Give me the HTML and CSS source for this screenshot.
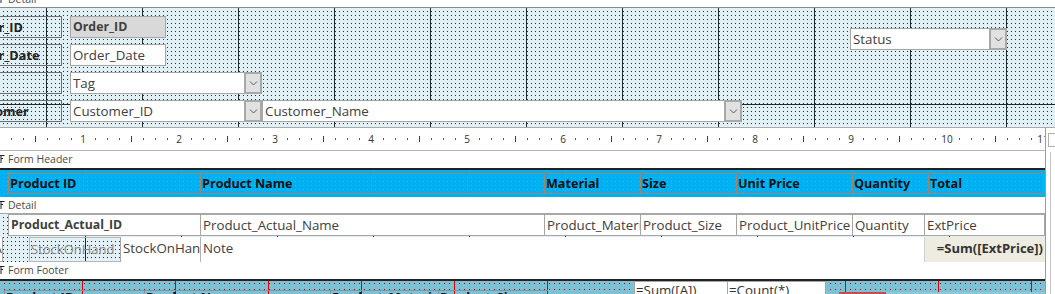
FILE: index.html
```html
<!DOCTYPE html>
<html>
<head>
<meta charset="utf-8">
<title>Form design view</title>
<link rel="stylesheet" href="styles.css">
</head>
<body>
<div class="designer">

  <div class="bar bar-top">
    <svg class="sel" width="5" height="9" viewBox="0 0 5 9"><path d="M0 0.5H4.5M1 0.5V8M1 3.5H3" fill="none" stroke="#222" stroke-width="1"/></svg>
    Detail
  </div>

  <!-- main form detail section -->
  <div class="form-detail">
    <div class="frow">
      <div class="lbl">Order_ID</div>
      <div class="tb w96 locked">Order_ID</div>
    </div>
    <div class="frow">
      <div class="lbl">Order_Date</div>
      <div class="tb w96">Order_Date</div>
    </div>
    <div class="frow">
      <div class="lbl"></div>
      <div class="tb combo w192">
        <span class="txt">Tag</span>
        <span class="btn"><svg width="9" height="5" viewBox="0 0 9 5"><path d="M1 0.5L4.5 4L8 0.5" fill="none" stroke="#5a5a5a"/></svg></span>
      </div>
    </div>
    <div class="frow">
      <div class="lbl">Customer</div>
      <div class="tb combo w192">
        <span class="txt">Customer_ID</span>
        <span class="btn"><svg width="9" height="5" viewBox="0 0 9 5"><path d="M1 0.5L4.5 4L8 0.5" fill="none" stroke="#5a5a5a"/></svg></span>
      </div>
      <div class="tb combo w480">
        <span class="txt">Customer_Name</span>
        <span class="btn"><svg width="9" height="5" viewBox="0 0 9 5"><path d="M1 0.5L4.5 4L8 0.5" fill="none" stroke="#5a5a5a"/></svg></span>
      </div>
    </div>

    <div class="tb combo status">
      <span class="txt">Status</span>
      <span class="btn"><svg width="9" height="5" viewBox="0 0 9 5"><path d="M1 0.5L4.5 4L8 0.5" fill="none" stroke="#5a5a5a"/></svg></span>
    </div>
  </div>

  <!-- subform control -->
  <div class="subform">
    <div class="sub-main">
      <div class="ruler">
        <span><b>1</b></span><span><b>2</b></span><span><b>3</b></span><span><b>4</b></span>
        <span><b>5</b></span><span><b>6</b></span><span><b>7</b></span><span><b>8</b></span>
        <span><b>9</b></span><span><b>10</b></span><span><b>11</b></span>
      </div>

      <div class="bar bar-thick">
        <svg class="sel" width="5" height="9" viewBox="0 0 5 9"><path d="M0 0.5H4.5M1 0.5V8M1 3.5H3" fill="none" stroke="#222" stroke-width="1"/></svg>
        Form Header
      </div>
      <div class="sub-header">
        <div class="hl w192">Product ID</div>
        <div class="hl w344">Product Name</div>
        <div class="hl w96">Material</div>
        <div class="hl w96">Size</div>
        <div class="hl w116">Unit Price</div>
        <div class="hl w76">Quantity</div>
        <div class="hl w116 last">Total</div>
      </div>

      <div class="bar bar-thin">
        <svg class="sel" width="5" height="9" viewBox="0 0 5 9"><path d="M0 0.5H4.5M1 0.5V8M1 3.5H3" fill="none" stroke="#222" stroke-width="1"/></svg>
        Detail
      </div>
      <div class="sub-detail">
        <div class="drow">
          <div class="cell w192 locked">Product_Actual_ID</div>
          <div class="cell w344">Product_Actual_Name</div>
          <div class="cell w96">Product_Material</div>
          <div class="cell w96">Product_Size</div>
          <div class="cell w116">Product_UnitPrice</div>
          <div class="cell w72">Quantity</div>
          <div class="cell w121 last">ExtPrice</div>
        </div>
        <div class="drow drow2">
          <div class="cell abox">A</div>
          <div class="ghost">StockOnHand</div>
          <div class="cell w80">StockOnHand</div>
          <div class="cell w724 plain">Note</div>
          <div class="cell w121 total">=Sum([ExtPrice])</div>
        </div>
      </div>

      <div class="bar bar-thick">
        <svg class="sel" width="5" height="9" viewBox="0 0 5 9"><path d="M0 0.5H4.5M1 0.5V8M1 3.5H3" fill="none" stroke="#222" stroke-width="1"/></svg>
        Form Footer
      </div>
      <div class="sub-footer">
        <div class="ff-left">
          <div class="fl w140">Product ID</div>
          <div class="fl w186">Product Name</div>
          <div class="fl w108">Product_Material</div>
          <div class="fl w110">Product_Size</div>
        </div>
        <div class="ff-box w93">=Sum([A])</div>
        <div class="ff-box w98">=Count(*)</div>
        <div class="ff-right">
          <div class="redbox">Product</div>
          <div class="lightbox">Unit_Price</div>
        </div>
      </div>
    </div>
    <div class="sub-side">
      <div class="corner"></div>
      <div class="vline"></div>
    </div>
  </div>

</div>
</body>
</html>
```

FILE: styles.css
```css
body {
  margin: 0;
  background: #fff;
  font-family: "Open Sans", "Noto Sans", sans-serif;
  overflow: hidden;
}

.designer {
  width: 1055px;
  height: 294px;
  overflow: hidden;
}

/* section bars */
.bar {
  position: relative;
  height: 16px;
  line-height: 16px;
  padding-left: 8px;
  font-size: 10.5px;
  color: #4a4a4a;
  background: #fff;
  white-space: nowrap;
}
.bar .sel {
  position: absolute;
  left: 0;
  top: 4px;
}
.bar-top {
  margin-top: -9px;
  border-bottom: 1px solid #8a8a8a;
}
.bar-thick {
  height: 17px;
  line-height: 17px;
  border-bottom: 2px solid #222;
}
.bar-thin {
  border-bottom: 1px solid #a8a8a8;
}

/* main form detail grid */
.form-detail {
  position: relative;
  box-sizing: border-box;
  height: 120px;
  padding-top: 8px;
  display: flex;
  flex-direction: column;
  gap: 6px;
  border-bottom: 1px solid #a9a9a9;
  background-color: #2b2b2b;
  background-image:
    linear-gradient(90deg, #1d2b30 1px, transparent 1px),
    linear-gradient(#1d2b30 1px, transparent 1px),
    linear-gradient(90deg, #e0f0f5 3px, transparent 3px),
    linear-gradient(#e0f0f5 3px, transparent 3px);
  background-size: 96px 100%, 100% 1px, 4px 4px, 4px 4px;
  background-position: 46px 0, 0 96px, 0 0, 0 0;
  background-repeat: repeat, no-repeat, repeat, repeat;
}

.frow {
  display: flex;
  height: 22px;
}

.lbl {
  box-sizing: border-box;
  width: 106px;
  margin-left: -44px;
  margin-right: 8px;
  padding-left: 10px;
  border: 1px solid #6e6e6e;
  font-size: 12.7px;
  font-weight: 700;
  line-height: 20px;
  color: #222;
  white-space: nowrap;
}

.tb {
  box-sizing: border-box;
  border: 1px solid #a6a6a6;
  background: #fff;
  padding-left: 2px;
  font-size: 13.3px;
  line-height: 20px;
  color: #404040;
  white-space: nowrap;
  overflow: hidden;
}
.locked {
  background: #d9d9d9;
  font-weight: 700;
}
.tb.locked,
.cell.locked {
  font-size: 12.3px;
}

.combo {
  display: flex;
  padding-left: 0;
  overflow: visible;
}
.combo .txt {
  flex: 1;
  padding-left: 2px;
  overflow: hidden;
}
.combo .btn {
  box-sizing: border-box;
  width: 18px;
  margin: -1px -1px -1px 0;
  border: 2px solid #a8a8a8;
  background: #e1e1e1;
  display: flex;
  align-items: center;
  justify-content: center;
}

.status {
  position: absolute;
  left: 850px;
  top: 20px;
  width: 157px;
  height: 22px;
}

.w72 { width: 72px; }
.w76 { width: 76px; }
.w80 { width: 80px; }
.w93 { width: 93px; }
.w96 { width: 96px; }
.w98 { width: 98px; }
.w108 { width: 108px; }
.w110 { width: 110px; }
.w116 { width: 116px; }
.w121 { width: 121px; }
.w140 { width: 140px; }
.w186 { width: 186px; }
.w192 { width: 192px; }
.w344 { width: 344px; }
.w480 { width: 480px; }
.w724 { width: 724px; }

/* subform */
.subform {
  display: flex;
}
.sub-main {
  width: 1045px;
  flex: none;
  overflow: hidden;
}
.sub-side {
  flex: 1;
  border-left: 1px solid #9c9c9c;
  background: #fff;
}
.corner {
  height: 12px;
  margin: 5px 0 5px 2px;
  border: 1px solid #b0b0b0;
  border-right: none;
}
.vline {
  height: 160px;
  margin-left: 4px;
  border-left: 1px solid #c4c4c4;
}

/* ruler */
.ruler {
  height: 22px;
  padding-left: 35px;
  display: flex;
  overflow: hidden;
  border-bottom: 1px solid #b4b4b4;
  background-color: #fff;
  background-image:
    linear-gradient(90deg, #3c3c3c 1px, transparent 1px),
    linear-gradient(90deg, #5a5a5a 1px, transparent 1px);
  background-size: 96px 6px, 12px 2px;
  background-position: 35px 8px, 11px 10px;
  background-repeat: repeat-x;
}
.ruler span {
  flex: none;
  width: 96px;
  text-align: center;
  font-size: 10px;
  line-height: 22px;
  color: #333;
}
.ruler b {
  font-weight: 400;
  background: #fff;
  padding: 0 2px;
}

/* subform form header */
.sub-header {
  box-sizing: border-box;
  height: 27px;
  padding: 3px 0 0 8px;
  display: flex;
  align-items: flex-start;
  background-color: #e2823e;
  background-image:
    linear-gradient(90deg, #e36c1f 1px, transparent 1px),
    linear-gradient(90deg, #00b0f0 3px, transparent 3px),
    linear-gradient(#00b0f0 3px, transparent 3px);
  background-size: 96px 100%, 4px 4px, 4px 4px;
  background-position: 85px 0, 0 0, 0 0;
}
.hl {
  box-sizing: border-box;
  height: 21px;
  padding-left: 1px;
  border: 1px solid #a4846c;
  border-right: none;
  font-size: 12.6px;
  font-weight: 700;
  line-height: 19px;
  color: #111;
  white-space: nowrap;
  overflow: hidden;
}
.hl.last {
  border-right: 1px solid #a4846c;
}

/* subform detail */
.sub-detail {
  height: 48px;
  background-color: #2b2b2b;
  background-image:
    linear-gradient(90deg, #1d2b30 1px, transparent 1px),
    linear-gradient(90deg, #e3f1f6 3px, transparent 3px),
    linear-gradient(#e3f1f6 3px, transparent 3px);
  background-size: 96px 100%, 4px 4px, 4px 4px;
  background-position: 85px 0, 0 0, 0 0;
}
.drow {
  display: flex;
  height: 22px;
  padding-left: 8px;
}
.drow2 {
  height: 25px;
  margin-top: 1px;
  padding-left: 0;
}
.cell {
  box-sizing: border-box;
  padding-left: 2px;
  border: 1px solid #a6a6a6;
  border-right: none;
  background: #fff;
  font-size: 13.3px;
  line-height: 20px;
  color: #404040;
  white-space: nowrap;
  overflow: hidden;
}
.cell.last {
  border-right: 1px solid #a6a6a6;
}
.drow2 .cell {
  line-height: 23px;
  border-top: none;
  border-bottom: none;
}
.cell.abox {
  width: 13px;
  margin-left: -10px;
  padding: 0;
  border-right: 1px solid #a6a6a6;
  border-bottom: 1px solid #a6a6a6;
  text-align: right;
  text-indent: -6px;
}
.ghost {
  box-sizing: border-box;
  width: 91px;
  margin-left: 26px;
  padding-left: 1px;
  border: 1px solid #b8b8b8;
  border-right: none;
  font-size: 13px;
  line-height: 23px;
  color: #868686;
  white-space: nowrap;
  overflow: hidden;
}
.cell.plain {
  border-left: 1px solid #b4b4b4;
}
.cell.total {
  background: #eeece1;
  border-left: 1px solid #d0d0d0;
  font-weight: 700;
  font-size: 13px;
  color: #333;
  text-align: right;
  padding-right: 2px;
}

/* subform footer */
.sub-footer {
  height: 20px;
  display: flex;
}
.ff-left {
  box-sizing: border-box;
  width: 634px;
  padding: 9px 0 0 4px;
  display: flex;
  align-items: flex-start;
  background-color: #c00000;
  background-image:
    linear-gradient(90deg, #e00000 1px, transparent 1px),
    linear-gradient(90deg, #7cc2d4 4px, transparent 4px),
    linear-gradient(#7cc2d4 5px, transparent 5px);
  background-size: 93px 100%, 5px 6px, 5px 6px;
  background-position: 82px 0, 0 3px, 0 3px;
}
.fl {
  box-sizing: border-box;
  height: 14px;
  padding-left: 1px;
  border: 1px solid #7d98a2;
  border-right: none;
  font-size: 13px;
  font-weight: 700;
  line-height: 13px;
  color: #111;
  white-space: nowrap;
  overflow: hidden;
}
.ff-box {
  box-sizing: border-box;
  border: 1px solid #a6a6a6;
  border-right: none;
  background: #fff;
  padding-left: 1px;
  font-size: 13.3px;
  line-height: 16px;
  color: #333;
  white-space: nowrap;
  overflow: hidden;
}
.ff-right {
  flex: 1;
  box-sizing: border-box;
  padding: 11px 0 0 13px;
  display: flex;
  border-left: 1px solid #a6a6a6;
  background-color: #c00000;
  background-image:
    linear-gradient(90deg, #e00000 1px, transparent 1px),
    linear-gradient(90deg, #7cc2d4 4px, transparent 4px),
    linear-gradient(#7cc2d4 5px, transparent 5px);
  background-size: 93px 100%, 5px 6px, 5px 6px;
  background-position: 19px 0, 0 3px, 0 3px;
}
.redbox {
  width: 45px;
  background: #c0504d;
  font-size: 11px;
  line-height: 14px;
  color: #e8a0a0;
  padding-left: 2px;
  overflow: hidden;
}
.lightbox {
  flex: 1;
  background: #8ccad9;
  font-size: 11px;
  line-height: 14px;
  color: #b4dde6;
  padding-left: 4px;
}
```
